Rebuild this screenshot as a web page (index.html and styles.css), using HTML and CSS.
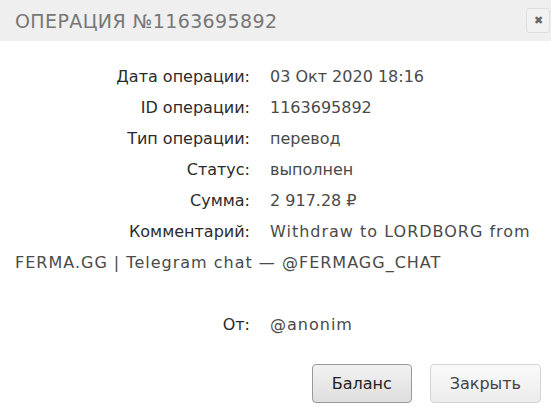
FILE: index.html
```html
<!DOCTYPE html>
<html lang="ru">
<head>
    <meta charset="UTF-8">
    <meta name="viewport" content="width=device-width, initial-scale=1.0">
    <title>Операция</title>
    <link rel="stylesheet" href="styles.css">
</head>
<body>
    <div class="modal">
        <div class="modal-head">
            <h3 class="modal-title">Операция №1163695892</h3>
            <button class="close" type="button">&#x2716;</button>
        </div>

        <div class="modal-body">
            <div class="row"><span class="lbl">Дата операции:</span><span class="val">03 Окт 2020 18:16</span></div>
            <div class="row"><span class="lbl">ID операции:</span><span class="val">1163695892</span></div>
            <div class="row"><span class="lbl">Тип операции:</span><span class="val">перевод</span></div>
            <div class="row"><span class="lbl">Статус:</span><span class="val">выполнен</span></div>
            <div class="row"><span class="lbl">Сумма:</span><span class="val">2 917.28 ₽</span></div>
            <div class="row"><span class="lbl">Комментарий:</span><span class="val wide">Withdraw to LORDBORG from FERMA.GG | Telegram chat — @FERMAGG_CHAT</span></div>
            <div class="row empty"></div>
            <div class="row"><span class="lbl">От:</span><span class="val wide">@anonim</span></div>
        </div>

        <div class="modal-foot">
            <button class="btn btn-dark" type="button">Баланс</button>
            <button class="btn" type="button">Закрыть</button>
        </div>
    </div>
</body>
</html>
```

FILE: styles.css
```css
body {
    margin: 0;
    background: #fff;
    font-family: "DejaVu Sans", Arial, sans-serif;
}

.modal-head {
    height: 41px;
    background: #efefef;
    display: flex;
    align-items: center;
    justify-content: space-between;
    padding: 0 1px 0 15px;
}

.modal-title {
    margin: 0;
    font-family: "DejaVu Sans", sans-serif;
    font-weight: normal;
    font-size: 19px;
    letter-spacing: 0.4px;
    text-transform: uppercase;
    color: #777;
}

.close {
    width: 24px;
    height: 25px;
    padding: 0;
    border: 1px solid #ddd;
    border-radius: 3px;
    background: #f2f2f2;
    color: #666;
    font-size: 11px;
    line-height: 23px;
}

.modal-body {
    padding: 20px 15px 0 15px;
    font-size: 16px;
    line-height: 31px;
}

.row.empty {
    height: 31px;
}

.lbl {
    display: inline-block;
    width: 235px;
    margin-right: 20px;
    text-align: right;
    color: #2b2b2b;
}

.val {
    color: #4a4a4a;
}

.val.wide {
    letter-spacing: 1px;
}

.modal-foot {
    display: flex;
    justify-content: flex-end;
    gap: 18px;
    padding: 24px 10px 0 0;
}

.btn {
    height: 39px;
    padding: 0 19px;
    font-family: "DejaVu Sans", Arial, sans-serif;
    font-size: 16px;
    color: #444;
    border: 1px solid #d4d4d4;
    border-radius: 4px;
    background: linear-gradient(#fafafa, #ececec);
}

.btn-dark {
    color: #222;
    border-color: #999;
    background: linear-gradient(#f2f2f2, #dedede);
}
```
